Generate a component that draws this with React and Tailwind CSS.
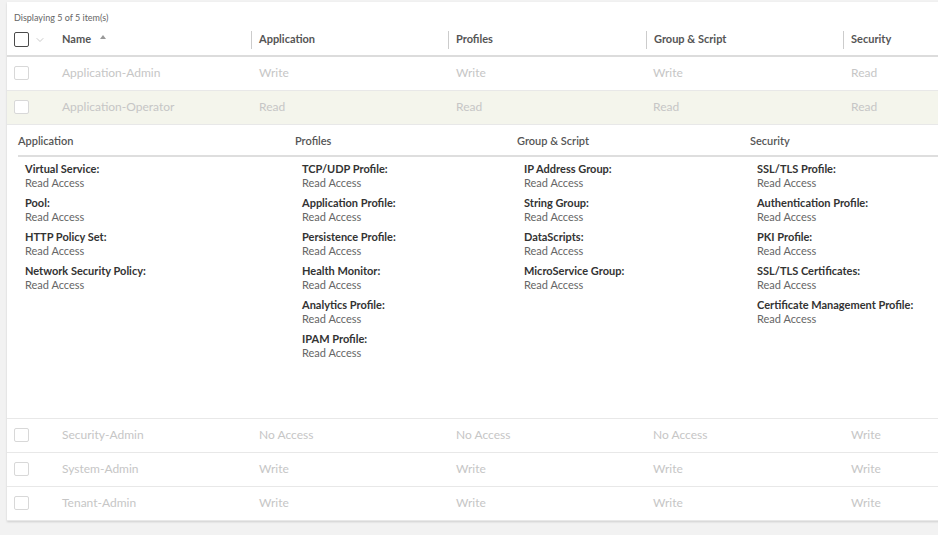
import { ChevronDown } from "lucide-react";

const rows = [
  { name: "Application-Admin", app: "Write", prof: "Write", grp: "Write", sec: "Read" },
  { name: "Application-Operator", app: "Read", prof: "Read", grp: "Read", sec: "Read", open: true },
  { name: "Security-Admin", app: "No Access", prof: "No Access", grp: "No Access", sec: "Write" },
  { name: "System-Admin", app: "Write", prof: "Write", grp: "Write", sec: "Write" },
  { name: "Tenant-Admin", app: "Write", prof: "Write", grp: "Write", sec: "Write" },
];

const detail = [
  {
    title: "Application",
    width: "w-[277px]",
    items: ["Virtual Service:", "Pool:", "HTTP Policy Set:", "Network Security Policy:"],
  },
  {
    title: "Profiles",
    width: "w-[222px]",
    items: [
      "TCP/UDP Profile:",
      "Application Profile:",
      "Persistence Profile:",
      "Health Monitor:",
      "Analytics Profile:",
      "IPAM Profile:",
    ],
  },
  {
    title: "Group & Script",
    width: "w-[233px]",
    items: ["IP Address Group:", "String Group:", "DataScripts:", "MicroService Group:"],
  },
  {
    title: "Security",
    width: "flex-1",
    items: [
      "SSL/TLS Profile:",
      "Authentication Profile:",
      "PKI Profile:",
      "SSL/TLS Certificates:",
      "Certificate Management Profile:",
    ],
  },
];

function Checkbox({ dark }) {
  return dark ? (
    <div className="w-[15px] h-[15px] border border-[#4a4a4a] rounded-[2px] bg-white" />
  ) : (
    <div className="w-[15px] h-[14px] border border-[#d8d8d8] rounded-[2px] bg-white" />
  );
}

function Row({ row }) {
  return (
    <div
      className={`flex items-center h-[34px] border-b border-[#e8e8e8] text-[12px] text-[#c6c6c6] ${
        row.open ? "bg-[#f4f5ec]" : "bg-white"
      }`}
    >
      <div className="w-[44px] pl-[7px] flex items-center">
        <Checkbox />
      </div>
      <div className="w-[200px] pl-[11px]">{row.name}</div>
      <div className="w-[197px] pl-[8px]">{row.app}</div>
      <div className="w-[198px] pl-[8px]">{row.prof}</div>
      <div className="w-[197px] pl-[7px]">{row.grp}</div>
      <div className="flex-1 pl-[8px]">{row.sec}</div>
    </div>
  );
}

function Detail() {
  return (
    <div className="h-[294px] border-b border-[#e8e8e8] pl-[11px] bg-white">
      <div className="flex border-b-2 border-[#dedede] pt-[8px] pb-[6px] text-[11px] font-semibold text-[#555]">
        {detail.map((c) => (
          <div key={c.title} className={c.width}>
            {c.title}
          </div>
        ))}
      </div>
      <div className="flex pt-[5px]">
        {detail.map((c) => (
          <div key={c.title} className={`${c.width} pl-[7px] flex flex-col gap-[6px]`}>
            {c.items.map((it) => (
              <div key={it} className="text-[11px] leading-[14px]">
                <div className="font-bold text-[#333]">{it}</div>
                <div className="text-[#666]">Read Access</div>
              </div>
            ))}
          </div>
        ))}
      </div>
    </div>
  );
}

export default function App() {
  return (
    <div
      className="w-[938px] h-[535px] overflow-hidden bg-[#f2f2f2] pt-[2px] pl-[7px]"
      style={{ fontFamily: "Lato, 'Noto Sans', sans-serif" }}
    >
      <div className="w-[950px] bg-white shadow-[0_1px_2px_rgba(0,0,0,0.15)]">
        <div className="pl-[7px] pt-[9px] text-[9px] text-[#666]">Displaying 5 of 5 item(s)</div>
        <div className="flex items-center h-[32px] border-b-2 border-[#dcdcdc] text-[11px] font-bold text-[#555]">
          <div className="w-[44px] pl-[7px] flex items-center gap-[5px]">
            <Checkbox dark />
            <ChevronDown className="w-[12px] h-[12px] text-[#aaa]" strokeWidth={1.25} />
          </div>
          <div className="w-[200px] pl-[11px] flex items-center gap-[9px]">
            Name
            <svg width="6" height="4" viewBox="0 0 6 4" className="mb-[5px]">
              <polygon points="3,0 6,4 0,4" fill="#999" />
            </svg>
          </div>
          {["Application", "Profiles", "Group & Script", "Security"].map((h, i) => (
            <div
              key={h}
              className={`${i === 3 ? "flex-1" : i === 1 ? "w-[198px]" : "w-[197px]"} border-l border-[#ccc] pl-[7px] h-[18px] flex items-center`}
            >
              {h}
            </div>
          ))}
        </div>
        {rows.map((r) => (
          <div key={r.name}>
            <Row row={r} />
            {r.open && <Detail />}
          </div>
        ))}
      </div>
    </div>
  );
}
